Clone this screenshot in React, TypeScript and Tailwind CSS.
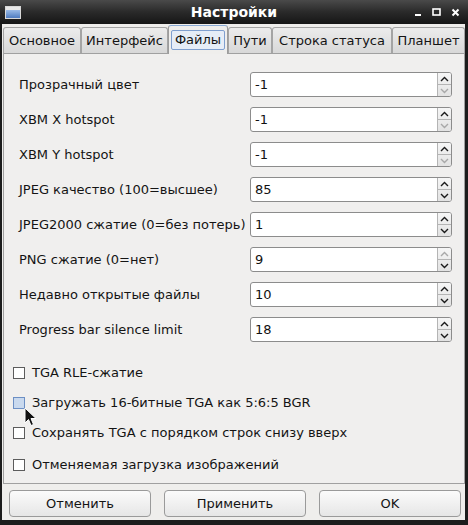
import React from 'react'

type Spin = { label: string; value: string; up: boolean; down: boolean }

const spins: Spin[] = [
  { label: 'Прозрачный цвет', value: '-1', up: true, down: false },
  { label: 'XBM X hotspot', value: '-1', up: true, down: false },
  { label: 'XBM Y hotspot', value: '-1', up: true, down: false },
  { label: 'JPEG качество (100=высшее)', value: '85', up: true, down: true },
  { label: 'JPEG2000 сжатие (0=без потерь)', value: '1', up: true, down: true },
  { label: 'PNG сжатие (0=нет)', value: '9', up: false, down: true },
  { label: 'Недавно открытые файлы', value: '10', up: true, down: true },
  { label: 'Progress bar silence limit', value: '18', up: true, down: true },
]

const checks = [
  { label: 'TGA RLE-сжатие', hover: false, mt: 'mt-[25px]' },
  { label: 'Загружать 16-битные TGA как 5:6:5 BGR', hover: true, mt: 'mt-[18px]' },
  { label: 'Сохранять TGA с порядком строк снизу вверх', hover: false, mt: 'mt-[18px]' },
  { label: 'Отменяемая загрузка изображений', hover: false, mt: 'mt-[20px]' },
]

const tabs = [
  { name: 'Основное', w: 'w-[78px]' },
  { name: 'Интерфейс', w: 'w-[87px]' },
  { name: 'Файлы', w: 'w-[60px]', active: true },
  { name: 'Пути', w: 'w-[44px]' },
  { name: 'Строка статуса', w: 'w-[120px]' },
  { name: 'Планшет', w: 'w-[73px]' },
]

function Chevron({ dir, enabled }: { dir: 'up' | 'down'; enabled: boolean }) {
  return (
    <svg width="9" height="6" viewBox="0 0 9 6">
      <path
        d={dir === 'up' ? 'M1 5 L4.5 1.5 L8 5' : 'M1 1 L4.5 4.5 L8 1'}
        fill="none"
        stroke={enabled ? '#1a1a1a' : '#a8a8a8'}
        strokeWidth="1.4"
      />
    </svg>
  )
}

function SpinBox({ s }: { s: Spin }) {
  return (
    <div className="w-[202px] h-[25px] flex border border-[#8c8c8c] rounded-[3px] bg-white overflow-hidden">
      <div className="flex-1 flex items-center pl-[4px] text-[13px] text-[#111]">{s.value}</div>
      <div className="w-[14px] flex flex-col border-l border-[#b4b4b4] bg-gradient-to-b from-[#f6f6f6] to-[#e2e2e2]">
        <div className="flex-1 flex items-center justify-center border-b border-[#b4b4b4]">
          <Chevron dir="up" enabled={s.up} />
        </div>
        <div className="flex-1 flex items-center justify-center">
          <Chevron dir="down" enabled={s.down} />
        </div>
      </div>
    </div>
  )
}

export default function App() {
  return (
    <div className="relative w-[468px] h-[525px] bg-[#1c1c1c] flex flex-col font-['DejaVu_Sans',sans-serif] text-[#141414] overflow-hidden">
      {/* Title bar */}
      <div className="h-[24px] flex items-center bg-gradient-to-b from-[#4a4a4a] via-[#2a2a2a] to-[#161616] relative">
        <div className="ml-[5px] w-[16px] h-[13px] border border-[#d8d8d8] flex flex-col">
          <div className="h-[3px] bg-[#e8e8e8]" />
          <div className="flex-1 bg-gradient-to-b from-[#9bbbe6] to-[#4f7cc0]" />
        </div>
        <div className="absolute inset-0 flex items-center justify-center text-white font-bold text-[14px]">
          Настройки
        </div>
        <div className="ml-auto mr-[8px] flex items-center gap-[10px] relative">
          <svg width="8" height="10" viewBox="0 0 8 10">
            <rect x="1" y="7" width="6" height="2" fill="#fff" />
          </svg>
          <svg width="9" height="9" viewBox="0 0 9 9">
            <rect x="1" y="1" width="7" height="6" fill="none" stroke="#fff" strokeWidth="1.6" />
          </svg>
          <svg width="9" height="9" viewBox="0 0 9 9">
            <path d="M1.5 1.5 L7.5 7.5 M7.5 1.5 L1.5 7.5" stroke="#fff" strokeWidth="2" />
          </svg>
        </div>
      </div>

      {/* Dialog body */}
      <div className="flex-1 ml-[2px] mr-[3px] mb-[5px] bg-[#efeeec] flex flex-col pl-[1px]">
        {/* Tabs */}
        <div className="h-[29px] flex items-end">
          {tabs.map((t) =>
            t.active ? (
              <div
                key={t.name}
                className={`${t.w} h-[29px] -mb-[1px] relative z-10 flex items-center justify-center bg-[#efeeec] border border-b-0 border-[#9c9c9c] border-t-[#8aaad4] rounded-t-[3px]`}
              >
                <div className="px-[3px] h-[20px] flex items-center border border-[#7f9fcf] rounded-[2px] bg-[#e6edf7] text-[13px]">
                  {t.name}
                </div>
              </div>
            ) : (
              <div
                key={t.name}
                className={`${t.w} h-[26px] flex items-center justify-center bg-gradient-to-b from-[#ececec] to-[#d8d8d8] border border-[#a4a4a4] border-b-0 rounded-t-[3px] text-[13px] whitespace-nowrap`}
              >
                {t.name}
              </div>
            ),
          )}
        </div>

        {/* Panel */}
        <div className="h-[431px] border border-[#a0a0a0] bg-[#f0efee] flex flex-col pt-[18px] pl-[15px] pr-[12px]">
          <div className="flex flex-col gap-[10px]">
            {spins.map((s) => (
              <div key={s.label} className="flex items-center">
                <div className="w-[231px] text-[13px] whitespace-nowrap">{s.label}</div>
                <SpinBox s={s} />
              </div>
            ))}
          </div>
          <div className="flex flex-col -ml-[6px]">
            {checks.map((c) => (
              <div key={c.label} className={`${c.mt} flex items-center h-[12px]`}>
                <div
                  className={`w-[12px] h-[12px] border ${
                    c.hover ? 'border-[#6c8fc4] bg-[#c9d9ee]' : 'border-[#5c5c5c] bg-white'
                  }`}
                />
                <div className="ml-[7px] text-[13px] whitespace-nowrap">{c.label}</div>
              </div>
            ))}
          </div>
        </div>

        {/* Buttons */}
        <div className="mt-[6px] pl-[6px] pr-[4px] flex gap-[13px]">
          {['Отменить', 'Применить', 'OK'].map((b) => (
            <div
              key={b}
              className="flex-1 h-[27px] flex items-center justify-center border border-[#9a9a9a] rounded-[4px] bg-gradient-to-b from-[#fbfbfb] to-[#e6e6e6] text-[13px]"
            >
              {b}
            </div>
          ))}
        </div>
      </div>

      {/* Mouse cursor */}
      <svg className="absolute left-[24px] top-[407px]" width="13" height="20" viewBox="0 0 13 20">
        <path
          d="M1 1 L1 16 L4.5 12.5 L7 18.5 L9.5 17.5 L7 11.5 L12 11.5 Z"
          fill="#111"
          stroke="#fff"
          strokeWidth="1"
          strokeLinejoin="round"
        />
      </svg>
    </div>
  )
}
